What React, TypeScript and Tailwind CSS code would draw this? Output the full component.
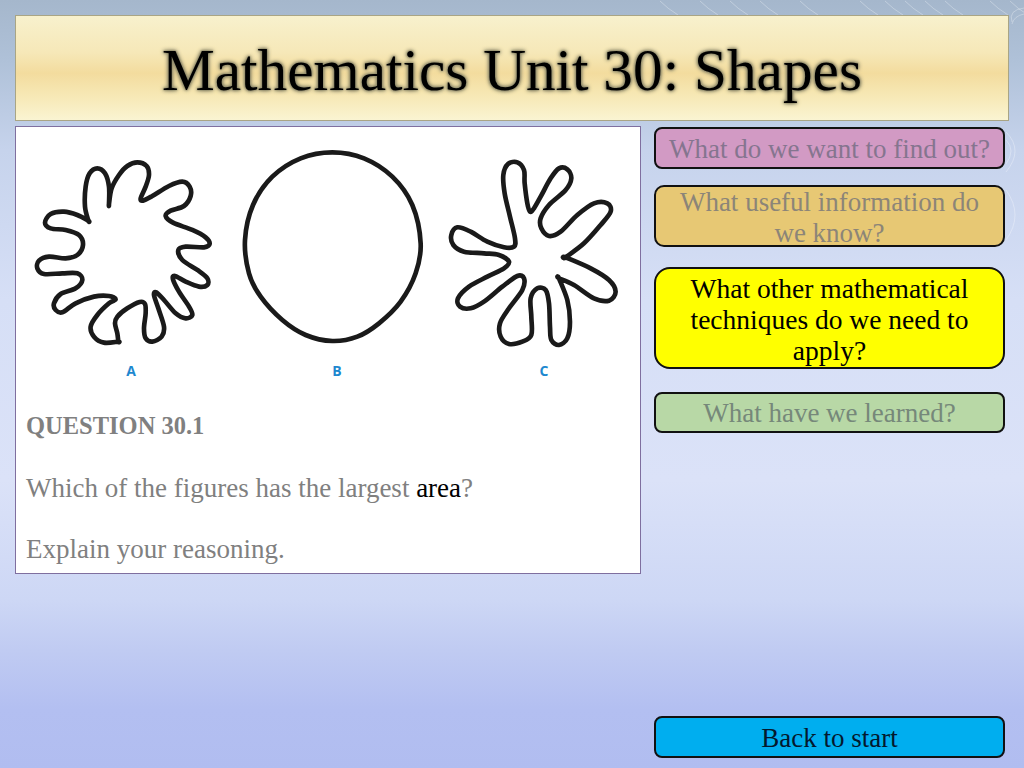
const FIG_A: number[][] = [
  [270,192],[270,192],[278,145],[300,105],[325,78],[355,67],[383,78],[390,105],[380,140],[365,175],[372,182],[400,168],[450,138],[490,125],[512,140],[515,168],[495,198],[455,212],[440,228],[462,248],[520,270],[560,292],[572,312],[555,322],[500,320],[478,330],[490,360],[535,390],[565,415],[565,435],[540,440],[500,425],[468,408],[462,418],[480,455],[510,500],[520,525],[500,535],[470,520],[435,480],[412,457],[405,465],[418,505],[435,560],[428,590],[400,605],[380,595],[375,565],[380,520],[378,492],[362,486],[325,505],[295,530],[288,550],[295,580],[298,605],[298,605],[255,608],[225,590],[215,560],[235,525],[270,490],[290,478],[270,468],[225,470],[170,490],[130,517],[110,510],[105,490],[125,462],[170,445],[190,420],[175,400],[130,400],[75,402],[55,385],[60,362],[90,350],[140,355],[175,345],[192,315],[180,285],[140,270],[95,265],[78,248],[95,222],[135,215],[175,225],[208,242],[208,242],[198,200],[200,140],[212,100],[235,85],[258,100],[270,140],
];

const FIG_B: number[][] = [
  [310,37],[405,55],[490,110],[550,195],[575,310],[560,400],[515,485],[450,550],[385,590],[310,603],[230,585],[160,540],[95,470],[60,400],[48,300],[72,195],[130,110],[215,55],
];

const FIG_C: number[][] = [
  [288,215],[280,190],[272,130],[270,90],[250,67],[222,72],[208,105],[212,160],[228,230],[243,295],[240,320],[210,322],[160,305],[110,275],[70,262],[52,285],[58,315],[90,335],[150,340],[195,345],[225,365],[210,385],[160,410],[105,440],[72,475],[78,500],[110,505],[150,485],[205,440],[250,408],[270,415],[265,450],[225,505],[198,550],[200,590],[225,612],[265,605],[292,585],[292,530],[290,475],[310,445],[335,450],[345,490],[348,560],[352,600],[375,615],[400,595],[408,545],[400,480],[375,415],[375,415],[420,435],[480,475],[525,482],[545,455],[525,420],[470,385],[395,352],[395,352],[450,310],[500,255],[530,215],[520,190],[480,190],[430,225],[380,275],[345,288],[322,265],[320,235],[345,195],[395,150],[412,115],[400,88],[375,85],[350,115],[320,170],[300,205],
];

// closed catmull-rom; a doubled point gives a sharp corner
function smooth(pts: number[][]) {
  const n = pts.length;
  let d = `M${pts[0][0]} ${pts[0][1]}`;
  for (let i = 0; i < n; i++) {
    const p0 = pts[(i - 1 + n) % n];
    const p1 = pts[i];
    const p2 = pts[(i + 1) % n];
    const p3 = pts[(i + 2) % n];
    const c1x = p1[0] + (p2[0] - p0[0]) / 6;
    const c1y = p1[1] + (p2[1] - p0[1]) / 6;
    const c2x = p2[0] - (p3[0] - p1[0]) / 6;
    const c2y = p2[1] - (p3[1] - p1[1]) / 6;
    d += `C${c1x.toFixed(1)} ${c1y.toFixed(1)} ${c2x.toFixed(1)} ${c2y.toFixed(1)} ${p2[0]} ${p2[1]}`;
  }
  return d + 'Z';
}

function Figures() {
  return (
    <svg width="623" height="284" viewBox="0 0 623 284" className="block">
      <g fill="none" stroke="#1a1a1a" strokeWidth="14" strokeLinejoin="round">
        <path transform="translate(3 13) scale(0.3333)" d={smooth(FIG_A)} />
        <path transform="translate(213 13) scale(0.3333)" d={smooth(FIG_B)} />
        <path transform="translate(418 13) scale(0.3333)" d={smooth(FIG_C)} />
      </g>
      <g fill="#1e88cf" fontFamily="'Open Sans', sans-serif" fontWeight="700" fontSize="14" textAnchor="middle">
        <text x="115" y="249">A</text>
        <text x="321" y="249">B</text>
        <text x="528" y="249">C</text>
      </g>
    </svg>
  );
}

// faint water rings in the slide background
function Swirls() {
  const top = [660, 700, 730, 760, 800, 860, 885, 905, 925, 945, 990, 1010];
  return (
    <svg width="1024" height="768" viewBox="0 0 1024 768" className="absolute inset-0" fill="none" stroke="#ffffff" strokeOpacity="0.3" strokeWidth="1">
      {top.map((x) => (
        <path key={x} d={`M${x} 1Q${x + 8} 9 ${x + 18} 15`} />
      ))}
      <path d="M1024 8Q1008 10 1012 22" />
      <path d="M1024 14Q1014 16 1012 24" />
      <path d="M1006 132Q1024 150 1006 172" />
      <path d="M1006 140Q1016 150 1006 164" />
      <path d="M1006 190Q1024 215 1006 240" />
    </svg>
  );
}

function Step({ children, className }: { children: React.ReactNode; className: string }) {
  return (
    <div className={`w-[351px] border-2 border-[#111] pt-[3px] flex items-center justify-center text-center text-[27px] leading-[31px] ${className}`}>
      <div>{children}</div>
    </div>
  );
}

export default function App() {
  return (
    <div className="relative w-[1024px] h-[768px] overflow-hidden font-['Liberation_Serif',serif] bg-[linear-gradient(180deg,#a5b7cc_0px,#afc1d8_60px,#c6d3ec_150px,#d6dff6_300px,#dbe2f8_480px,#cdd7f5_600px,#c0cbf2_650px,#b3bff1_710px,#b1bdf0_768px)]">
      <Swirls />
      <div className="relative h-full flex flex-col pt-[15px] pb-[10px] pl-[15px]">
        <div className="w-[994px] h-[106px] shrink-0 flex items-center justify-center border border-[#a9a585] bg-[linear-gradient(180deg,#f8f1cd_0%,#f6e8b8_35%,#f3dc9e_55%,#f7eab9_80%,#faf4d2_100%)]">
          <h1 className="text-[59.3px] leading-none mt-[5px] text-black font-normal [text-shadow:0_0_1px_#8f8a6c,0_0_2px_#8f8a6c,0_0_3px_#8f8a6c,0_0_4px_#8f8a6c,0_0_5px_#8f8a6c]">
            Mathematics Unit 30: Shapes
          </h1>
        </div>

        <div className="flex flex-1 mt-[5px]">
          <div className="w-[626px] h-[448px] shrink-0 bg-white border border-[#7f6f9f]">
            <Figures />
            <div className="pl-[10px] text-[27px] leading-[30.8px] text-[#808080]">
              <div className="font-bold text-[24.5px]">QUESTION 30.1</div>
              <div className="h-[30.8px]" />
              <div>
                Which of the figures has the largest <span className="text-black">area</span>?
              </div>
              <div className="h-[30.8px]" />
              <div>Explain your reasoning.</div>
            </div>
          </div>

          <div className="flex flex-col ml-[13px] pt-[1px]">
            <Step className="h-[42px] rounded-[8px] bg-[#d29ac4] text-[#85758f]">What do we want to find out?</Step>
            <Step className="h-[62px] mt-[16px] rounded-[10px] bg-[#e7c874] text-[#8c8578]">
              What useful information do<br />we know?
            </Step>
            <Step className="h-[102px] mt-[19.5px] rounded-[16px] bg-[#ffff00] text-black !text-[27.5px]">
              What other mathematical<br />techniques do we need to<br />apply?
            </Step>
            <Step className="h-[41.5px] mt-[23px] rounded-[8px] bg-[#b8d8a6] text-[#76887a]">What have we learned?</Step>
            <Step className="h-[42px] mt-auto rounded-[8px] bg-[#00aeef] text-[#04182e]">Back to start</Step>
          </div>
        </div>
      </div>
    </div>
  );
}
